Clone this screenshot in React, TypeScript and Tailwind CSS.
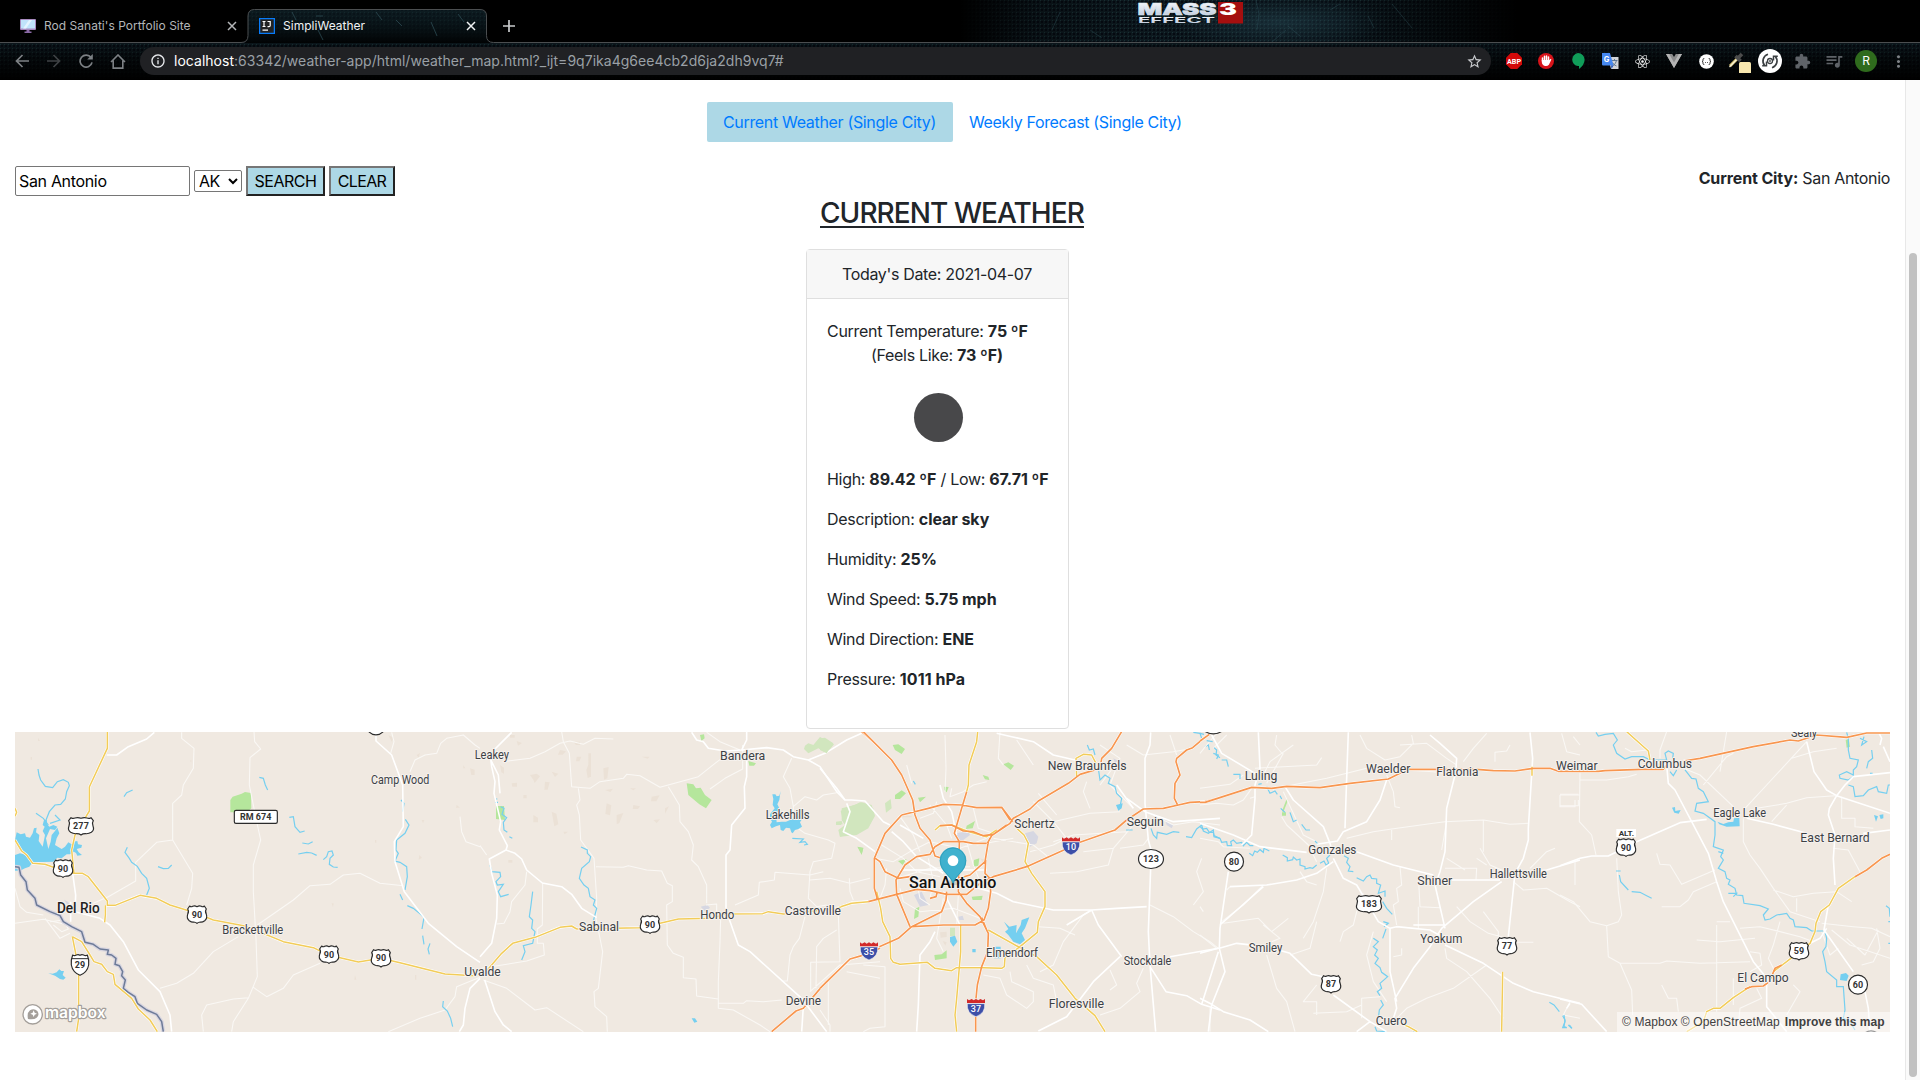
import React from "react";
import { FaReact } from "react-icons/fa";
import { MdExtension, MdQueueMusic, MdStarBorder, MdMoreVert, MdInfoOutline } from "react-icons/md";

const SANS = "font-['Inter','Liberation_Sans',sans-serif]";

/* ---------- Browser chrome ---------- */

function Texture() {
  return (
    <svg className="absolute inset-0 h-20 w-full" width="1920" height="80" viewBox="0 0 1920 80">
      <defs>
        <pattern id="mesh" width="4" height="4" patternUnits="userSpaceOnUse">
          <rect width="4" height="4" fill="#0d191f" />
          <rect width="2" height="2" x="1" y="1" fill="#050a12" />
          <rect width="1" height="1" fill="#1b3338" />
        </pattern>
        <linearGradient id="topFade" x1="0" x2="1" y1="0" y2="0">
          <stop offset="0" stopColor="#000" />
          <stop offset=".5" stopColor="#000" />
          <stop offset=".54" stopColor="#000" stopOpacity=".3" />
          <stop offset=".6" stopColor="#000" stopOpacity="0" />
          <stop offset=".7" stopColor="#000" stopOpacity=".1" />
          <stop offset=".79" stopColor="#000" />
          <stop offset="1" stopColor="#000" />
        </linearGradient>
        <linearGradient id="barFade" x1="0" x2="0" y1="0" y2="1">
          <stop offset="0" stopColor="#000" stopOpacity=".1" />
          <stop offset=".45" stopColor="#000" stopOpacity=".65" />
          <stop offset="1" stopColor="#000" />
        </linearGradient>
        <radialGradient id="glow">
          <stop offset="0" stopColor="#2d5563" stopOpacity=".45" />
          <stop offset="1" stopColor="#2d5563" stopOpacity="0" />
        </radialGradient>
      </defs>
      <rect width="1920" height="80" fill="url(#mesh)" />
      <ellipse cx="1280" cy="22" rx="110" ry="26" fill="url(#glow)" />
      <rect width="1920" height="42" fill="url(#topFade)" />
      <rect y="42" width="1920" height="38" fill="url(#barFade)" />
      <g stroke="#38626b" strokeOpacity=".4" strokeWidth=".8" fill="none">
        <path d="M1256 0l3 14-2 16M1392 4l20 24M1368 16l6 12M1272 42l14-12M1300 36l-12-10M1060 12l-8 18M1090 30l12 8M1330 10l10-6" />
      </g>
    </svg>
  );
}

function MassEffectLogo() {
  return (
    <svg className="absolute left-[1136px] top-0" width="110" height="26" viewBox="0 0 110 26">
      <defs>
        <linearGradient id="steel" x1="0" x2="0" y1="0" y2="1">
          <stop offset="0" stopColor="#fff" />
          <stop offset="1" stopColor="#b5c4d8" />
        </linearGradient>
      </defs>
      <rect x="82" y="2" width="25" height="21.500" fill="#a50f0f" />
      <g fontFamily="Inter" fontWeight="900" fill="url(#steel)">
        <text x="1.500" y="15" fontSize="16.500" textLength="79" lengthAdjust="spacingAndGlyphs" stroke="#dfe7f2" strokeWidth=".5">MASS</text>
        <text x="83" y="15" fontSize="16.500" textLength="18" lengthAdjust="spacingAndGlyphs" fill="#fff">3</text>
        <text x="2" y="22.800" fontSize="7.800" fontWeight="700" textLength="77" lengthAdjust="spacingAndGlyphs">EFFECT</text>
      </g>
    </svg>
  );
}

function CloseX({ color }: { color: string }) {
  return (
    <svg width="10" height="10" viewBox="0 0 10 10" fill="none" stroke={color} strokeWidth="1.500">
      <path d="M1 1l8 8M9 1l-8 8" />
    </svg>
  );
}

function MonitorIcon() {
  return (
    <svg width="16" height="14" viewBox="0 0 16 14">
      <rect x="0" y="0" width="16" height="11" rx="1" fill="#a98bc0" />
      <rect x="1" y="1" width="14" height="8.500" fill="#bfe3fb" />
      <path d="M3 9.500l6-8.500h3l-6 8.500z" fill="#e3f4ff" />
      <path d="M6.500 11h3v1.500h2V14h-7v-1.500h2z" fill="#8c6ba8" />
    </svg>
  );
}

function IdeaIcon() {
  return (
    <svg width="16" height="16" viewBox="0 0 16 16">
      <rect x=".6" y=".6" width="14.800" height="14.800" fill="#222" stroke="#087cfa" strokeWidth="1.300" />
      <path d="M3.500 3.500h3M5 3.500v5M3.500 8.500h3M8.500 3.500h2.700v4q0 1.200-1.200 1.200h-1.500M3.500 12.200h5.500" stroke="#fff" strokeWidth="1.200" fill="none" />
    </svg>
  );
}

function TabOutline() {
  return (
    <svg className="absolute left-0 top-0" width="1920" height="44" viewBox="0 0 1920 44">
      <defs>
        <linearGradient id="tabFade" x1="0" x2="0" y1="0" y2="1">
          <stop offset="0" stopColor="#0d1e23" stopOpacity=".5" />
          <stop offset="1" stopColor="#010304" />
        </linearGradient>
      </defs>
      <path d="M242 43q6 0 6-6V16q0-6.500 6.500-6.500H480q6.500 0 6.500 6.500V37q0 6 6 6z" fill="url(#mesh)" />
      <path d="M242 43q6 0 6-6V16q0-6.500 6.500-6.500H480q6.500 0 6.500 6.500V37q0 6 6 6z" fill="url(#tabFade)" />
      <path d="M292 12l4 8M316 16h7M376 12l6 8M396 20l6 6M431 22l6 14M458 14l6 8M318 30l5 10" stroke="#30525a" strokeWidth=".7" />
      <path d="M0 42.500H241q7 0 7-7V16q0-6.500 6.500-6.500H480q6.500 0 6.500 6.500V35.500q0 7 7 7H1920" stroke="#4b4e50" fill="none" />
    </svg>
  );
}

function Cell({ children }: { children?: React.ReactNode }) {
  return <div className="flex h-7 w-8 shrink-0 items-center justify-center">{children}</div>;
}

function Toolbar() {
  return (
    <div className="relative flex h-[38px] items-center text-[#5f6368]">
      <div className="flex w-[140px] items-center pl-[6px]">
        <Cell>
          <svg width="14" height="14" viewBox="0 0 14 14" fill="none" stroke="#7d8185" strokeWidth="1.700"><path d="M14 7H1.500M7.500 1L1.500 7l6 6" /></svg>
        </Cell>
        <Cell>
          <svg width="14" height="14" viewBox="0 0 14 14" fill="none" stroke="#3f4245" strokeWidth="1.700"><path d="M0 7h12.500M6.500 1l6 6-6 6" /></svg>
        </Cell>
        <Cell>
          <svg width="14" height="14" viewBox="0 0 14 14" fill="none" stroke="#7d8185" strokeWidth="1.700"><path d="M12 3.600A6 6 0 1 0 13 8.400" /><path d="M13.800 0v5.600H8.200z" fill="#7d8185" stroke="none" /></svg>
        </Cell>
        <Cell>
          <svg width="16" height="15" viewBox="0 0 16 15" fill="none" stroke="#7d8185" strokeWidth="1.600"><path d="M1 8l7-7 7 7M3.200 6.500v7.600h9.600V6.500" /></svg>
        </Cell>
      </div>
      <div className="flex h-7 w-[1351px] items-center rounded-full bg-[#202124] pl-[10px] pr-2">
        <MdInfoOutline className="text-[16px] text-[#e8eaed]" />
        <span className="ml-2 whitespace-pre text-[14px] tracking-[0.025px] text-[#9aa0a6]">
          <span className="text-white">localhost</span>:63342/weather-app/html/weather_map.html?_ijt=9q7ika4g6ee4cb2d6ja2dh9vq7#
        </span>
        <MdStarBorder className="ml-auto text-[17px] text-[#c8cacd]" />
      </div>
      <div className="ml-[7px] flex items-center">
        <Cell>
          <svg width="16" height="16" viewBox="0 0 16 16"><path d="M4.700 0h6.600L16 4.700v6.600L11.300 16H4.700L0 11.300V4.700z" fill="#d20a0a" /><text x="1" y="10.800" fontFamily="Roboto" fontWeight="700" fontSize="7.800" textLength="14" lengthAdjust="spacingAndGlyphs" fill="#fff">ABP</text></svg>
        </Cell>
        <Cell>
          <svg width="16" height="16" viewBox="0 0 16 16"><circle cx="8" cy="8" r="8" fill="#d7141a" /><path d="M4.500 8V5M6.500 8V3.300M8.500 8V2.900M10.500 8V4" stroke="#fff" strokeWidth="1.500" strokeLinecap="round" /><path d="M3.800 7h7.500l1.400-1.300.7.800-2.500 5.300Q9.500 13.500 7 13q-3-.8-3.200-4z" fill="#fff" /></svg>
        </Cell>
        <Cell>
          <svg width="14" height="16" viewBox="0 0 14 16"><path d="M7 0a6.600 6.600 0 0 1 6.600 6.600Q13.600 12 8 16v-2.900H7A6.600 6.600 0 0 1 7 0z" fill="#109d59" /></svg>
        </Cell>
        <Cell>
          <svg width="17" height="16" viewBox="0 0 17 16"><path d="M6 4h10.500v12H9z" fill="#d3d5d8" /><path d="M9.500 7.500h6M12.500 6v1.500M10.500 13q3.500-2 4-5.500M10.500 9.500q1 2.500 4 3.500" stroke="#57708c" strokeWidth=".9" fill="none" /><path d="M0 0h8l3.500 12.500H1Q0 12.500 0 11.500z" fill="#4688f1" /><path d="M9 12.500h2.500L9.500 16z" fill="#2858b8" /><text x="1.800" y="9" fontFamily="Inter" fontWeight="700" fontSize="7.500" fill="#fff">G</text></svg>
        </Cell>
        <Cell><FaReact className="text-[15px] text-[#f1f1f1]" /></Cell>
        <Cell>
          <svg width="16" height="14" viewBox="0 0 16 14"><path d="M0 0h6.200L8 3l1.800-3H16L8 14z" fill="#8c8c8c" /><path d="M0 0h3.200L8 8.400 12.800 0H16L8 14z" fill="#b4b4b4" /></svg>
        </Cell>
        <Cell>
          <svg width="15" height="15" viewBox="0 0 15 15" fill="none"><circle cx="7.500" cy="7.500" r="7.300" fill="#fff" /><path d="M5.300 4.500H5q-1 0-1 1v.8q0 1.200-1 1.200 1 0 1 1.200v.8q0 1 1 1h.3M9.700 4.500h.3q1 0 1 1v.8q0 1.200 1 1.200-1 0-1 1.200v.8q0 1-1 1h-.3M6 8.500h.8M8.200 8.500H9" stroke="#222" strokeWidth=".9" /></svg>
        </Cell>
        <Cell>
          <svg width="26" height="24" viewBox="0 0 26 24"><path d="M5 17l8-8" stroke="#d7c16b" strokeWidth="3" /><path d="M4.500 18L12 10" stroke="#f8f3d8" strokeWidth="1.200" /><path d="M10.500 7l5 5M12.500 9.500L17 5" stroke="#4c4c4c" strokeWidth="3.600" /><rect x="14" y="13" width="12" height="12" rx="1.500" fill="#f8e7ae" /></svg>
        </Cell>
        <Cell>
          <div className="flex h-6 w-6 shrink-0 items-center justify-center rounded-full bg-white">
            <svg width="18" height="18" viewBox="0 0 18 18" fill="none" stroke="#3c4043" strokeWidth="1.700"><path d="M7 2.300A7 7 0 0 0 3.600 13.500M11 15.700A7 7 0 0 0 14.400 4.500" /><path d="M1.200 13.800h4.300V9.500M16.800 4.200h-4.300v4.300" strokeWidth="1.500" /><circle cx="9" cy="9" r="2.500" strokeWidth="1.300" /><circle cx="9" cy="9" r=".9" fill="#3c4043" stroke="none" /></svg>
          </div>
        </Cell>
        <Cell><MdExtension className="text-[17px] text-[#5f6368]" /></Cell>
        <Cell><MdQueueMusic className="text-[20px] text-[#5f6368]" /></Cell>
        <Cell>
          <span className="flex h-[22px] w-[22px] items-center justify-center rounded-full bg-[#2f6b1d] text-[12px] text-white">R</span>
        </Cell>
        <Cell><MdMoreVert className="text-[19px] text-[#7d8185]" /></Cell>
      </div>
    </div>
  );
}

function BrowserChrome() {
  return (
    <header className="relative h-20 shrink-0 overflow-hidden bg-black">
      <Texture />
      <MassEffectLogo />
      <TabOutline />
      <div className="relative flex h-[42px] items-center pt-[10px] text-[12px]">
        <div className="flex w-[248px] items-center pl-5 pr-[11px] text-[#b4b6b8]">
          <MonitorIcon />
          <span className="ml-2 tracking-[0.02px]">Rod Sanati's Portfolio Site</span>
          <span className="ml-auto"><CloseX color="#b4b6b8" /></span>
        </div>
        <div className="flex w-[238px] items-center pl-[11px] pr-[10px] text-[#f1f3f4]">
          <IdeaIcon />
          <span className="ml-2 tracking-[0.02px]">SimpliWeather</span>
          <span className="ml-auto"><CloseX color="#f1f3f4" /></span>
        </div>
        <svg className="ml-[17px]" width="12" height="12" viewBox="0 0 12 12" stroke="#c9cbcd" strokeWidth="1.700"><path d="M6 0v12M0 6h12" /></svg>
      </div>
      <Toolbar />
    </header>
  );
}

/* ---------- Map ---------- */

type Layer = {
  dx: number;
  minor?: string;
  white?: string;
  yellow?: string;
  orange?: string;
  river?: string;
  lake?: string;
  green?: string;
  pale?: string;
  grey?: string;
  hills?: string;
};

const layers: Layer[] = [
  {
    dx: -15,
    minor:
      "M545 22V40L582 70 580 130 550 180 545 210 518 235V345L578 445 575 490 560 540M518 345L470 352 407 412V468L325 515 280 535M762 20L764 50 782 72 750 98 748 180 770 290 782 345 760 420V500L768 640 772 755 745 820 700 890 695 920M772 600L880 525 930 482 990 478 1030 450 1080 445 1140 475 1210 482M745 818L700 822 620 840 605 870 610 920M760 787L800 815 850 790 880 750 960 715M715 635L640 680 580 745 530 775 480 790M1230 140L1245 105 1275 90 1310 85 1322 55 1340 40 1390 30 1425 60 1440 70M1380 275L1385 320 1398 350 1440 365M45 490L60 545 80 562 130 570M45 595L130 583 205 600M135 580L165 620 180 640 210 625M150 590L190 585 205 612 185 620 160 600M1440 757L1370 785 1365 815 1335 855 1260 880 1165 920M1175 22L1182 50 1172 85",
    white:
      "M320 90H350L385 65 440 42 463 22M1128 22V48L1175 90 1208 180 1210 305 1183 350 1185 410 1213 500 1285 595 1370 665 1440 712M218 445L227 510 225 560 300 580 330 600 370 650 415 735 480 800 510 870 515 920M212 590L212 530M1440 760L1410 790 1395 850 1390 900 1378 920",
    yellow:
      "M322 20V70L268 186V258L225 330 215 375 222 445M45 345L65 378 80 390 98 415 135 418 175 432 222 445H248L265 455 322 528V541H345L420 511 470 520 510 540 590 565 640 585 735 603 850 650 940 668 985 690 1075 711 1143 700 1200 713 1335 747 1420 752M316 541V570L314 592M45 250L50 262 45 274M217 635L228 690 236 740V880L230 920M217 635L245 650 270 690 282 710 305 718 322 740 340 748 345 778 395 820 415 852 450 885 472 920",
    river:
      "M114 132L117 150 122 165 136 184 158 188 172 170 190 164 205 172 208 182 200 200 196 222 182 238 165 240 148 260 136 290M372 215L380 203 398 195M778 157L790 160 796 180 803 195M868 277L880 275 885 305 900 322 914 318M907 354L925 357 938 350M895 387L920 382 935 384 950 391M970 404L980 395 985 380 996 378 1000 390 990 400 988 418 1000 426 1013 427M382 367L375 382 388 400 395 412 412 424 425 445 440 460 448 490 440 510M474 425L490 431 505 430 515 420M1203 225L1212 235 1208 260M1216 283L1227 300 1215 325 1190 345 1188 375 1195 385 1185 408 1200 412 1220 425 1222 455 1215 495M1200 508L1208 525M1222 542L1240 550 1262 568 1272 578 1266 612M1268 632L1272 658M1290 655L1284 672 1288 688M1330 828L1328 845 1342 858 1352 880 1358 905M108 265L130 280 145 300M165 270L180 285 150 295",
    lake:
      "M45 390L60 385 80 390 65 375 52 360 45 345 50 322 62 328 75 325 78 335 90 338 98 325 102 310 110 308 108 322 118 330 116 348 128 365 135 330 128 318 134 305 128 300 132 285 140 285 142 298 148 305 160 300 172 305 165 315 150 312 138 340 145 372 152 350 155 330 165 318 172 308 178 325 170 340 165 360 185 372 195 365 205 352 215 358 220 350 232 348 234 358 246 360 244 368 230 372 236 382 246 390 232 392 228 384 222 380 210 388 200 388 185 400 172 398 160 410 98 412 88 425 75 430 60 437 45 437ZM145 745L158 746 170 742 178 733 184 738 192 738 188 750 197 758 190 764 180 762 165 752Z",
    green: "M691 225L698 215 725 206 735 201 753 204 754 250 740 262H691Z",
    grey: "M192 524L204 530 214 545 208 550Z",
    hills: "M92 96h4v8h-4zM114 38l6 10h-6zM570 108l4-4v8zM1165 30l16 8-6 12zM1210 150l6 14h-8zM1250 90l10-6-4 14zM1280 158h10l-4 8zM1370 240l10 8h-12zM1410 130l14 4v16h-10zM1390 120l6 10h-6zM1265 285h8l-4 10zM1258 390l8 8-10 6zM1125 345h4v8h-4zM1065 750l4 14h-6zM1245 750h4v14h-4zM995 535h6l-2 12z",
  },
  {
    dx: 465,
    minor:
      "M245 20L250 50 268 85 275 185 330 190 360 170 430 160 440 148 480 152 540 187 655 155 705 115 725 100M295 190L300 225 290 240 298 270 302 345 342 400 350 520 348 580 368 680 355 790 342 800 345 845 380 875 382 920M348 425L430 427 445 422 500 435 545 438 562 475 577 482V530L560 540 562 660 580 685 610 697V758L648 762 650 813 715 822V835M565 185L580 210 598 240 600 290 625 320 640 360 635 405 655 425 680 480V535M678 540L710 537V560M722 580L720 650 715 770V850L760 855 840 900 870 920M715 835H790L800 827 850 830 905 825M140 440L135 480 95 530 90 560 72 595 50 597M188 475L187 600 172 612V655H190L193 690 140 708 5 730M68 110L150 100 195 80 240 55 270 48 310 58 345 40 400 42M690 192L735 160 788 132V60M680 22L720 50 780 75M935 100L910 155 930 190 940 245 975 215 1010 225 1030 210 1070 203M940 245V300L975 325 1045 345 1065 355 1055 400 1000 410 990 440 985 520 1010 545 1040 540M765 540L835 510 838 472 883 465 885 442 990 450 1030 440M990 465L1050 460 1110 475 1170 460M1108 460L1110 500 1120 525M975 575L958 640 940 665 930 690 922 768H905M1075 570L1080 710 992 712V800M1008 790L1010 665 1030 640 1070 615M1045 770V900M990 800L1080 720 1200 710M1100 740L1200 760M10 765L80 790 165 855 200 848 310 920M0 362L20 390",
    white:
      "M95 22L42 75 32 100 35 125 45 170 42 205 55 260 62 290 58 315 82 362 78 375 28 402 35 445 52 510 50 580 35 655 0 695M78 375L105 385 125 402 140 435 187 474 245 485 275 508 305 550 350 578M635 22L650 45 670 50 685 70 735 78 785 75 800 45V20M785 75L860 68 910 75 940 95 985 105 1020 125 1070 200 1095 225M985 105L1035 85 1100 45 1145 25M800 75V155L793 185 795 250 755 300 750 375 738 390V555L775 660 810 680 965 820 1040 920M970 845L965 920M14 765L45 860 70 900 95 920M30 100L55 150 60 205",
    yellow:
      "M22 735L65 685 98 655 165 637 240 607 275 603 290 612M290 612L400 610 480 608 540 595 595 582 700 580 730 567 848 566 865 560 910 567 1065 552 1100 540 1115 533 1165 530",
    orange: "M875 920L948 858 970 850 1000 815 1035 773 1112 702 1150 690 1200 670M1145 20L1200 68",
    river:
      "M45 222L52 222M45 232H54M62 245L72 250 66 268 80 278 70 292 72 315 82 322M88 335L97 340M30 420L35 440 60 442 62 455 48 470 52 480 70 478 55 500 62 515 86 508M158 500L153 540 148 575 158 585 155 610 165 620 158 655 130 662 135 680 125 705M303 366L322 375 322 385 332 395 328 410 305 430 298 460 312 480 325 490 330 515 345 525 340 540 350 550 342 580 338 600M937 340L970 342 960 352 975 350 982 358 972 360",
    lake:
      "M902 198L898 212 890 214 886 208 877 208 880 222 878 240 884 250 870 268 870 280 876 290 870 300 875 310 888 304 900 300 902 315 910 318 918 308 930 310 934 322 938 325 945 315 955 312 966 305 960 292 968 280 955 272 945 270 938 282 930 285 918 290 905 290 890 292 888 270 898 250 892 238 898 225ZM635 880L645 880 652 890 643 893Z",
    green:
      "M620 175L640 178 648 190 662 188 675 210 695 225 678 250 658 238 625 210ZM48 243L72 243 75 285 48 282ZM660 30L672 28 674 40 664 48ZM805 108L828 115 822 122 808 122ZM1134 366L1150 370 1145 388Z",
    pale:
      "M975 62L985 55 1000 60 1020 36 1062 58 1040 85 1015 70 985 85 972 72ZM1095 250L1145 232 1175 240 1185 272 1165 310 1130 330 1080 335 1078 318 1100 298 1088 285 1082 258ZM1070 290L1085 288 1088 298 1072 300Z",
    grey: "M662 545L682 540 690 548 676 560Z",
    hills:
      "M325 85l8 0 0 70-10 4-4-24 6-16zM150 150l20-4 10 8-16 20-4-10zM215 140l20 6-10 10zM195 170l14 2-6 22-10 0zM130 210h10v10h-10zM60 120l12 8v18l-8-4zM290 95h14l-6 14h-10zM370 130l16-4-4 34-10 4zM95 175l16-2 0 12-14 0zM160 270l14 8 0 14h-14zM215 260l14 6 6 32-12 6zM250 320h14l-10 8zM380 235l14 6-4 30-14-4zM410 270l20-6-12 30-8 4zM460 240l20 4-6 8h-16zM515 215l24-4-10 18h-16zM555 250l12-6-12 22zM520 285l20-2-10 12zM450 190h18l-8 6zM375 195l24-4-8 10zM90 30h14v8h-14zM110 48l16 6-12 8zM240 75l18 4-10 10h-14zM485 95h24l-6 6zM280 50h20v10h-12zM85 405h12v8h-12z",
  },
  {
    dx: 805,
    minor:
      "M375 30L378 130 375 200M260 120L275 175M540 22L535 100 550 120M590 45L640 120M185 360L250 400 290 440 360 455M350 230L340 265 300 280M395 190L390 215 430 200 460 180 500 170M330 240L380 300 395 340M460 250L475 310 520 325M240 275L280 330 300 380M165 400L220 410 270 380 330 350 420 370 500 340M230 460L330 430 450 425M240 490L250 530 300 560 400 550 480 580M325 400L340 470 330 520M415 510L410 600M370 520L350 640 370 680M440 350L460 420 480 470M470 360L580 340M200 430L195 480 180 520M290 470L300 520 330 540M520 340L640 360 690 400M640 230L700 290 810 265 900 260M700 290L740 340 700 360 630 380M655 205L710 270M800 170L790 200 810 250M840 60L900 100 870 180 940 250M920 60L970 90 1060 80 1120 70M900 100L840 180M880 370L865 420 770 440 690 445M940 300L880 370 790 380M700 350L760 330 920 320M1000 270L1060 300 1120 290 1200 300M985 340L970 360 900 370M990 540L1060 575 1120 620 1170 650 1195 670M655 605L720 610 765 630M660 740L700 720 730 650 790 570 815 555M870 735L890 780 870 795M970 730L950 775 960 800 900 850 840 870M570 740L575 770 640 800 640 830 620 850 560 810 540 760 490 750M130 720L195 725 195 905 150 910 130 920M0 855L30 900 30 920M1170 850V920M1120 540L1150 500 1130 440 1145 400M1070 90L1050 30M620 720L640 760 700 780 710 830",
    white:
      "M530 25L575 35 640 50 700 90 765 105M992 22L990 60 975 100 975 235 985 345 1000 400M992 430L985 620 990 720 1007 920M440 480L530 505 580 530 700 555 815 555 835 600 905 695M815 555L890 550 980 545M655 918L740 875 820 770 900 695M1050 695L1195 670M990 725L1038 800 1100 812 1145 838 1200 855M1145 838L1195 680M345 620L330 650 300 690 295 840 290 920M0 130L50 190 75 225 95 225 135 228 190 290 210 300M80 235L90 260 70 320 110 340 165 380M215 320L250 350 290 395 370 445M240 300L310 340M360 180L370 220 395 260 410 330M920 220L975 260 1060 290 1200 280M890 180L940 250M815 555L740 600M240 435H500M370 500L400 560 420 600",
    yellow:
      "M473 20L470 50 447 120 445 180 440 200M345 315L360 302 395 300 440 318 500 335 530 315M770 155L768 100 790 88 815 90 828 115M588 308L612 330 625 355 615 410 635 445 675 500 675 545 655 590 652 622 600 665 555 698 553 725 545 730 490 728 410 728 395 737 345 730 322 712 240 718 220 712 212 700 210 635 188 590 182 550 170 500M62 545L95 535 145 530M505 615L600 668 650 695 710 750 765 820 825 872 855 920M422 600V680L410 820 405 870 410 920",
    orange:
      "M130 20L215 105 245 150 278 225 285 270 300 310 330 345 345 393 380 405 400 440M440 200L425 250 403 325 418 350 415 500 440 535 480 575 505 625 503 680 485 725 472 780 468 820M467 875V920M905 20L875 70 845 100 840 130 780 148 745 175 655 228 630 252 580 280 570 295 515 332 505 350 495 410 450 450 415 460M545 247L570 285M245 270L325 250 370 238 425 240 470 248 545 247 578 290M245 270L195 325 163 400V490L173 525M163 398L180 410 195 440 235 460 270 455M145 530L230 508 290 493 330 497 380 508 440 508 480 475 520 455 620 425 725 378 780 352 885 315 920 285 970 252 1030 250 1075 240 1110 232 1155 230 1200 218M1072 238L1063 220 1065 175 1080 150 1068 110 1070 100 1100 75 1118 68 1165 28M0 790L90 702 125 692M178 665L235 640 275 605 365 560 378 525 380 500M270 605L230 508 228 465 255 420 290 395 330 388 345 365 370 350 430 350 460 355H500M502 355L510 340M275 605L370 600 465 600 492 585 505 550 512 500 510 460 495 445 497 405M330 520L348 515 352 500M360 302L395 300 430 318 460 320 490 332 520 328 560 300M485 578L500 615",
    river:
      "M802 60L808 75 820 72 825 90M835 130L840 165 855 150 870 160 865 175 885 185 890 205 905 220 900 245M918 315H938M993 310L1000 330 1010 340 1012 322 1040 328 1060 320 1078 322M1098 335L1115 338 1130 312 1145 300 1150 318 1165 325 1180 315 1182 335 1200 340M1120 22L1140 25 1145 40M1155 65L1165 60 1168 75M1180 85L1195 90 1190 102M280 168L286 178",
    lake:
      "M552 590L568 605 590 600 588 625 602 600 605 585 628 577 615 610 605 625 615 645 600 658 580 650 565 630 555 620 565 612ZM390 636L405 632 412 650 400 665 390 650ZM457 672h10v10h-10zM522 665h20v35h-20zM888 240L908 235 905 250 895 257Z",
    green:
      "M218 60L235 58 255 72 245 87 225 75ZM225 210L245 196 258 205 240 222 225 222ZM294 218L318 215 300 232ZM372 185L386 186 380 202 372 195ZM440 302L465 288 458 310 438 312ZM462 405L478 400 475 422 460 425ZM234 408L260 402 248 420ZM112 365L130 368 125 390ZM285 552L298 545 295 575 282 582ZM343 690L365 688 380 676 380 700 345 705ZM455 515L488 512 485 525 458 525ZM550 118L565 112 582 122 572 135ZM488 150L505 155 508 165 495 163Z",
    pale:
      "M0 40L15 38 40 55 20 85 0 75ZM65 250L105 240 120 232 160 250 163 275 140 310 105 325 60 335 55 315 75 300 65 285ZM195 235L212 222 215 250 198 263ZM48 290h15v10H48zM390 608h15v25h-15z",
    grey: "M408 325L445 318 450 330 430 345 415 350ZM615 325L640 318 655 335 650 355 630 365ZM282 510L305 500 325 540 300 545ZM415 575L428 572 432 585H418ZM1035 285L1060 300 1055 310 1040 300ZM880 100L895 108 885 115Z",
    hills: "M360 622l20-2v16l-18 2zM368 648l12 4-4 10zM480 400l14 4-4 10zM245 272l30 0v5h-30z",
  },
  {
    dx: 1185,
    minor:
      "M50 25L20 60 0 85M80 30L40 70M250 85L200 175M165 130L250 125 350 120 365 98M0 190L90 178 130 150M250 185L380 160 500 130M480 30L500 70 555 105 600 95 640 55 635 30M560 150L580 200 585 245 600 248M280 60L210 110 190 150M600 60L680 55 740 100 770 120M860 25L820 70 790 110M885 110V82L920 78 930 60M765 150L700 140 610 135M440 340L520 320 575 312 700 295 735 290 850 285 930 298 985 295M575 315V345M850 285V380M740 290L725 375M600 425L605 480 590 490 595 530 580 540 590 600M655 450L660 545 720 548M655 545V610M795 435L740 400M735 430L830 430 828 465M0 240L50 235 100 240 130 225 155 190M0 340L55 350 70 365 150 370M165 215L150 220M1140 60L1120 35M1085 25L1100 80 1140 90M1080 210H1140M1080 210V245H1125V225M850 560L880 600 895 620V670M770 545L810 590 865 625 920 640M925 652H1000M940 470L970 495 1040 490 1110 530 1140 545M990 430L1040 380 1065 370M250 200L310 330 350 350M245 275L260 300 325 360 350 410M300 440L320 470 350 480M380 430L370 500 340 590 310 640M10 560L0 545M0 630L50 670M90 485L80 495M65 590L130 540 190 480M70 595L175 580 215 620 265 580M190 600L240 640 215 650M200 690L230 790 260 830 285 920M270 690L330 670 350 590M490 505L470 560 460 600 430 620 420 650M520 620L500 690 520 770 560 830M605 670V690L580 695M735 670L740 700 800 740 870 820 910 880M860 720L760 790 680 820 620 850 590 880M485 880V820L540 815M485 840L440 860 340 865M350 870V830L310 830 350 780M940 450L870 420 840 370M1110 830L1090 870 1140 880M860 420L830 400M230 30L225 60 250 90",
    white:
      "M35 30L65 85 170 148M175 22L180 130 165 180 165 220 155 330 125 360M255 185L280 225 370 305 390 355 400 390M445 22L440 160 435 310M690 30L720 55 770 100 768 130M765 150L740 250 735 380 720 440 705 480 735 610M735 600L640 600M990 22L998 100 985 310 985 345 970 400 945 445 935 540 925 635M945 445L1040 435 1140 405M900 465L755 465M905 470L820 530 725 610 690 665 640 730 585 820 590 850 580 880M735 660L850 715 940 775 1000 800 1140 835M0 295L100 330 180 365 320 382M350 358L412 348 430 320 500 290 540 225 560 165M470 380L580 420 700 450M400 400L430 460 470 480 500 530 535 590 570 610 570 740 590 830M570 610L590 605 690 615 735 640M400 410L350 445 290 465 200 480 90 485M85 440L60 610 58 670 75 740 35 840 25 920M58 670L110 655 200 665 270 685 335 748 370 755M400 810L510 890 560 920M35 838L70 860 150 885 205 920M0 685L60 668M0 820L35 838M510 890L470 920M190 485L60 600",
    yellow: "M996 125V152M908 740L905 920M600 895L625 905 652 920",
    orange: "M0 232H15L155 187 215 190 260 184 360 188 450 175 565 162 600 145 625 133H830L880 137 945 138 1000 130H1050L1075 139 1140 137M0 48L28 28",
    river:
      "M0 25L12 28M20 47L38 50M42 68L50 75 48 90 60 98M65 105H80L85 125M100 148H120V162M140 165L155 165M175 178L185 176M200 185L210 205 225 198 232 208M240 212L245 222M242 250L255 262M270 262L280 290 290 285M305 298L318 315 330 315M0 305L8 312 20 310 28 322 40 322 42 332 60 340 65 352 80 350 82 362 95 362 92 350 100 345 110 355 125 352 130 362 140 352 150 362 160 362M148 385L158 392 164 378 172 382 180 374 190 382 192 370 208 378M248 390L262 398 262 408 278 404 280 396 290 405 300 402 300 420 315 425 315 432 330 428 338 430 350 420M360 415L372 408 378 420 386 415 380 400 390 390M345 348L355 358M432 392L445 400 440 412 450 425 445 438 460 440M470 458L490 468 500 455 510 450 515 460 530 462 530 475 542 480 535 505 555 498 555 515M548 530L560 550 577 568M550 590L565 595 552 605M558 612L548 640M520 640L535 650 520 665 532 675 524 690 535 700 525 715 540 728 545 742 563 755 540 775 545 790 532 800 540 812M542 825L550 840 538 855 535 880M525 905L530 918 560 920M640 918h5M1048 832L1062 840 1078 860M1088 872L1095 885 1092 905 1100 908M1105 900L1115 910",
    green: "M260 222L264 226 250 262 246 258ZM246 262h12v10h-12z",
  },
  {
    dx: 1545,
    minor:
      "M60 140L58 290 95 330 108 390M60 165H140L205 155 230 148M0 208H55M0 242H55V225M45 410V480M0 510L40 530 90 590 140 602 175 590 185 570 175 500 170 400M140 602L145 695 180 715 215 795 218 870M180 715H300L320 708 420 715 570 710M470 600V860M470 590H510M410 645L480 650 585 640M430 180L500 95 520 85M480 140L500 20M550 280V350L570 390 600 430 640 490 690 560 780 590M555 250L620 180 740 50M590 250L680 235 740 218 825 212M635 290L680 240M290 385L300 418 330 420 365 478 465 435M470 470L400 500 385 525 360 545H305M640 495L700 515 760 505 830 500 875 530M710 520V560M660 590L640 660 625 700 640 730M570 680L600 685 605 720 570 740M540 610L600 605 720 635 760 650M785 595L880 605 935 610 990 635M815 615L870 660 990 700M820 370L865 375 900 440M845 215V280H885V305L940 310M905 720L940 710 960 670 950 610M785 620L810 690 835 670M520 760V840M590 790L605 820 540 850 535 900M305 780L325 820H350L355 860M195 70L215 80 260 75M300 100V75L320 20M520 245L420 150 370 130M695 100L760 80 830 70M860 640L915 690 955 615M680 870L720 800 700 780",
    white:
      "M270 105L320 120 325 175 345 195 395 290 445 385 470 470 490 530 545 640 580 710 625 765M0 422L60 400 95 393H145L230 350 360 293 440 283M560 280L640 298 740 325M740 50L762 140 800 195 830 212 990 265M830 212L855 180 880 155 990 143M830 212L808 250 805 270 825 330 820 400 825 480M805 540L792 615 880 740M800 610L780 640 740 660M915 800L925 850 930 920M620 765V845L680 920M960 60L965 40 955 20M990 110L970 65M0 822L65 838 140 920M910 325L990 315M20 850L30 835",
    yellow: "M200 20L265 78 270 105M380 920L430 890 440 860 460 850H480L520 818 570 785M640 740L680 710 750 655 765 620 768 595 782 560 808 540 835 490 885 455",
    orange: "M0 139H115L135 137 245 133H310L320 120M370 108L420 100 580 65 690 45 715 48 770 30 860 37 920 24H990M555 792L575 785 610 783 628 770 645 730 665 720M885 455L920 435 965 400 990 388",
    river:
      "M108 22L115 33 135 28 160 25 172 45 160 60 170 85 195 102 215 95 250 95 270 105 300 105 320 105 315 85 325 78 340 85 338 100M330 140L340 152 350 135M375 135L395 160 408 162 415 190 430 200 445 230 410 235 405 258 430 265 465 290 465 330 460 365 475 370 490 375 482 395 490 405 475 430 495 440 500 460 510 465 505 478 525 490 530 510 548 512 552 535 600 542 625 552 610 570 615 585 630 582 650 570 680 565 690 580 700 585 705 605 740 608 755 618 790 618M795 620L800 640 798 665 788 680 795 710 800 740 830 765 830 785 850 785 855 855 850 880 870 890 885 915M505 505L530 505 520 515M475 380L490 385M860 22L865 40 865 75 870 100 895 105 890 125 880 135 880 155 865 165 840 160 838 150 860 140 880 150M865 180L880 185 885 215 910 212 925 195 950 185 955 200 980 205 985 180H990M900 40L920 50 905 60 912 35M935 75L938 100 925 110 920 130M930 145h8M168 438h14M178 450L182 470 205 495M215 500L240 502 260 512 275 520M978 542L988 550 990 575M985 590h5M985 655h5M12 870L15 890 8 908 20 908M28 900L36 910",
    lake: "M472 290L490 297 505 292 520 290 522 280 538 278 539 304 500 305 478 298ZM336 248L345 246 346 258 362 255 356 266 343 263ZM842 748L858 744 866 752 860 768 840 765ZM942 270L954 274 948 290ZM958 270L970 268 970 280 962 282Z",
    green: "M857 45L866 42 870 65 860 68Z",
  },
];

const borderPath =
  "M45 425L57 427 62 450 78 470 82 495 105 520 110 540 150 560 180 572 190 590 215 605 245 620 255 652 280 658 300 672 325 675 322 688 335 690 348 700 345 718 358 722 368 740 365 752 376 765 370 790 385 802 405 815 412 835 440 855 470 868 485 890 490 920";

type Label = [number, number, number, number, string, string?];
/* [layer index, left x, baseline y, width, text, kind] */
const labels: Label[] = [
  [0, 1113, 176, 175, "Camp Wood"],
  [0, 171, 564, 128, "Del Rio", "city"],
  [0, 667, 627, 183, "Brackettville"],
  [0, 1424, 102, 103, "Leakey"],
  [0, 1393, 753, 109, "Uvalde"],
  [1, 720, 104, 136, "Bandera"],
  [1, 857, 283, 132, "Lakehills"],
  [1, 297, 618, 120, "Sabinal"],
  [1, 661, 581, 102, "Hondo"],
  [1, 914, 570, 169, "Castroville"],
  [1, 917, 841, 106, "Devine"],
  [2, 683, 135, 237, "New Braunfels"],
  [2, 583, 309, 121, "Schertz"],
  [2, 920, 303, 111, "Seguin"],
  [2, 498, 695, 156, "Elmendorf"],
  [2, 911, 719, 143, "Stockdale"],
  [2, 686, 848, 166, "Floresville"],
  [3, 134, 164, 98, "Luling"],
  [3, 498, 144, 133, "Waelder"],
  [3, 709, 153, 126, "Flatonia"],
  [3, 325, 387, 144, "Gonzales"],
  [3, 652, 479, 105, "Shiner"],
  [3, 869, 459, 172, "Hallettsville"],
  [3, 661, 655, 126, "Yoakum"],
  [3, 146, 681, 101, "Smiley"],
  [3, 527, 899, 94, "Cuero"],
  [4, -12, 134, 125, "Weimar"],
  [4, 233, 130, 163, "Columbus"],
  [4, 460, 277, 158, "Eagle Lake"],
  [4, 721, 351, 208, "East Bernard"],
  [4, 532, 770, 154, "El Campo"],
  [4, 693, 35, 78, "Sealy"],
  [2, 267, 488, 262, "San Antonio", "metro"],
];

/* [layer index, centre x, centre y, number, kind] */
const shields: [number, number, number, string, "us" | "uswide" | "round" | "oval" | "inter" | "mx"][] = [
  [0, 243, 304, "277", "uswide"],
  [0, 189, 431, "90", "us"],
  [0, 591, 569, "90", "us"],
  [0, 987, 689, "90", "us"],
  [0, 1143, 700, "90", "us"],
  [0, 240, 720, "29", "mx"],
  [0, 1128, 1, "", "round"],
  [1, 510, 599, "90", "us"],
  [2, 147, 680, "35", "inter"],
  [2, 753, 365, "10", "inter"],
  [2, 468, 850, "37", "inter"],
  [2, 993, 402, "123", "oval"],
  [2, 1180, -2, "", "oval"],
  [3, 102, 410, "80", "round"],
  [3, 507, 538, "183", "uswide"],
  [3, 393, 778, "87", "us"],
  [3, 921, 664, "77", "us"],
  [4, 198, 368, "90", "us"],
  [4, 717, 679, "59", "us"],
  [4, 894, 779, "60", "round"],
  [4, 933, 946, "", "round"],
];

function Shield({ x, y, n, kind }: { x: number; y: number; n: string; kind: string }) {
  return (
    <g transform={`translate(${x} ${y})`}>
      {kind === "us" && (
        <path d="M-22-26q4 4 9 1 6-3 13 1 7-4 13-1 5 3 9-1l6 9q-5 7 0 16 4 12-5 19-7 5-13 4-6 0-10 4-4-4-10-4-6 1-13-4-9-7-5-19 5-9 0-16z" fill="#fff" stroke="#2b2b2b" strokeWidth="3.500" />
      )}
      {kind === "uswide" && (
        <path d="M-30-26q6 4 12 1 9-3 18 1 9-4 18-1 6 3 12-1l7 9q-5 7-1 16 5 12-5 19-8 5-18 4-8 0-13 4-5-4-13-4-10 1-18-4-10-7-5-19 4-9-1-16z" fill="#fff" stroke="#2b2b2b" strokeWidth="3.500" />
      )}
      {kind === "round" && <circle r="28.500" fill="#fff" stroke="#2b2b2b" strokeWidth="3.500" />}
      {kind === "oval" && <ellipse rx="37.500" ry="28.500" fill="#fff" stroke="#2b2b2b" strokeWidth="3.500" />}
      {kind === "mx" && (
        <g>
          <path d="M-22-30q5 4 11 0 6-3 11 1 5-4 11-1 6 4 11 0 6 15 4 30-4 22-26 31-22-9-26-31-2-15 4-30z" fill="#fff" stroke="#2b2b2b" strokeWidth="3.500" />
          <path d="M-25-19h50" stroke="#2b2b2b" strokeWidth="3" />
        </g>
      )}
      {kind === "inter" && (
        <g>
          <path d="M-26-14h52q3 28-26 39-29-11-26-39z" fill="#3d4fa8" stroke="#fff" strokeWidth="1.500" />
          <path d="M-27-28l6 4 8-4 6 4 7-4 7 4 6-4 8 4 6-4v12h-54z" fill="#d22a2a" />
        </g>
      )}
      {n && (
        <text
          y={kind === "inter" ? 11 : 9}
          textAnchor="middle"
          fontFamily="Roboto"
          fontWeight={kind === "inter" ? 500 : 700}
          fontSize="27"
          letterSpacing="0.500"
          fill={kind === "inter" ? "#fff" : "#333"}
        >
          {n}
        </text>
      )}
    </g>
  );
}

function WeatherMap() {
  return (
    <div className="relative h-[300px] w-[1875px] overflow-hidden bg-[#f0e9e1]">
      <svg className="block" width="1875" height="300" viewBox="0 0 1875 300" fill="none" strokeLinejoin="round">
        {layers.map((l) => (
          <g key={l.dx} transform={`translate(${l.dx} -7) scale(.33333)`}>
            <path d={l.hills} fill="#ebe1d6" />
            <path d={l.pale} fill="#d1e6be" />
            <path d={l.green} fill="#b5e69c" />
            <path d={l.grey} fill="#d6d7e2" />
            <path d={l.minor} stroke="#faf8f5" strokeWidth="3.200" />
            <path d={l.lake} fill="#75cff0" />
            <path d={l.river} stroke="#75cff0" strokeWidth="3.600" strokeLinejoin="miter" />
            <path d={l.white} stroke="#fff" strokeWidth="4.800" />
          </g>
        ))}
        <g transform="translate(-15 -7) scale(.33333)">
          <path d={borderPath} stroke="#d9d6e0" strokeWidth="12" />
          <path d={borderPath} stroke="#6d7b98" strokeWidth="4.500" />
        </g>
        {layers.map((l) => (
          <g key={l.dx} transform={`translate(${l.dx} -7) scale(.33333)`}>
            <path d={l.yellow} stroke="#fff" strokeWidth="8" />
            <path d={l.orange} stroke="#fff" strokeWidth="8" />
            <path d={l.yellow} stroke="#f2cc59" strokeWidth="4.500" />
            <path d={l.orange} stroke="#f8964f" strokeWidth="5" />
          </g>
        ))}
        {shields.map(([i, x, y, n, kind], k) => (
          <g key={k} transform={`translate(${layers[i].dx} -7) scale(.33333)`}>
            <Shield x={x} y={y} n={n} kind={kind} />
          </g>
        ))}
        <g transform="translate(-15 -7) scale(.33333)">
          <rect x="703" y="256" width="129" height="39" rx="5" fill="#fff" stroke="#2b2b2b" strokeWidth="3.500" />
          <text x="720" y="286" fontFamily="Roboto" fontWeight="700" fontSize="28" textLength="94" lengthAdjust="spacingAndGlyphs" fill="#333">RM 674</text>
        </g>
        <g transform="translate(1545 -7) scale(.33333)">
          <rect x="169" y="312" width="59" height="24" fill="#fff" />
          <text x="176" y="333" fontFamily="Roboto" fontWeight="700" fontSize="23" textLength="46" lengthAdjust="spacingAndGlyphs" fill="#333">ALT.</text>
        </g>
        {labels.map(([i, x, y, w, t, kind]) => (
          <g key={t} transform={`translate(${layers[i].dx} -7) scale(.33333)`}>
            <text
              x={x}
              y={y}
              textLength={w}
              lengthAdjust="spacingAndGlyphs"
              fontFamily="Roboto"
              fontWeight={kind ? 500 : 400}
              fontSize={kind === "metro" ? 49 : kind === "city" ? 43 : t === "Lakehills" || t === "Elmendorf" || t === "Stockdale" || t === "Hallettsville" || t === "Leakey" ? 36 : 38}
              fill={kind === "metro" ? "#111" : kind === "city" ? "#222" : "#3d4145"}
              stroke="#f6f2ee"
              strokeWidth="6"
              paintOrder="stroke"
            >
              {t}
            </text>
          </g>
        ))}
        <g transform="translate(805 -7) scale(.33333)">
          <ellipse cx="399" cy="473" rx="22" ry="8" fill="#000" opacity=".12" />
          <path d="M399 476C390 450 359 440 359 407a40 40 0 0 1 80 0C439 440 408 450 399 476z" fill="#3fb1ce" />
          <path d="M399 474C392 450 361 438 361 407a38 38 0 0 1 76 0C437 438 406 450 399 474z" stroke="#2f9cb8" strokeWidth="2.500" />
          <circle cx="399" cy="407" r="16" fill="#fff" />
        </g>
        <g transform="translate(-15 -7) scale(.33333)">
          <circle cx="98" cy="868" r="29" fill="#fff" stroke="#a49f9a" strokeWidth="4" />
          <path d="M84 882q-4-18 6-26 12-8 22 2 8 12-2 20-8 7-26 4z" fill="#a49f9a" />
          <path d="M101 856l3 7 7 3-7 3-3 7-3-7-7-3 7-3z" fill="#fff" />
          <text x="135" y="880" fontFamily="Inter" fontWeight="600" fontSize="46" textLength="182" lengthAdjust="spacingAndGlyphs" fill="#fff" stroke="#a49f9a" strokeWidth="7" paintOrder="stroke">mapbox</text>
        </g>
      </svg>
      <div className="absolute bottom-0 right-0 flex h-5 w-[273px] items-center whitespace-pre bg-white/50 pl-[5px] font-['Liberation_Sans',sans-serif] text-[12px] leading-5 text-[#404040]">
        <span className="tracking-[0.1px]">© Mapbox</span>
        <span className="ml-[3px] tracking-[0.15px]">© OpenStreetMap</span>
        <span className="ml-[5px] font-bold tracking-[0.02px]">Improve this map</span>
      </div>
    </div>
  );
}

/* ---------- Page ---------- */

function SearchForm() {
  return (
    <form className="flex items-center gap-1 text-[16px] text-black">
      <input
        defaultValue="San Antonio"
        className="h-[30px] w-[175px] rounded-[2px] border border-[#767676] bg-white px-[3px] tracking-[-0.33px] outline-none"
      />
      <div className="flex h-[22px] w-12 items-center rounded-[2px] border border-[#767676] pl-1 leading-none">
        <span className="tracking-[-0.6px]">AK</span>
        <svg className="ml-auto mr-[3px]" width="10" height="7" viewBox="0 0 10 7" fill="none" stroke="#000" strokeWidth="2"><path d="M1 1l4 4 4-4" /></svg>
      </div>
      <button type="button" className="h-[30px] w-[79px] border-2 border-b-[#222] border-l-[#767676] border-r-[#222] border-t-[#767676] bg-[#add8e6] leading-none tracking-[-0.5px]">SEARCH</button>
      <button type="button" className="h-[30px] w-[66px] border-2 border-b-[#222] border-l-[#767676] border-r-[#222] border-t-[#767676] bg-[#add8e6] leading-none tracking-[-0.65px]">CLEAR</button>
    </form>
  );
}

function Value({ children }: { children: React.ReactNode }) {
  return <b className="font-bold tracking-[-0.06px]">{children}</b>;
}

function WeatherCard() {
  return (
    <section className="ml-[791px] mt-[19px] h-[480px] w-[263px] rounded border border-[#dfdfdf] tracking-[-0.3px]">
      <div className="h-[49px] border-b border-[#dfdfdf] bg-[#f7f7f7] pl-[35px] pt-3 tracking-[-0.34px]">Today's Date: 2021-04-07</div>
      <div className="whitespace-nowrap pl-5 pt-5">
        <p>Current Temperature: <Value>75 ºF</Value></p>
        <p className="pl-[44px]">(Feels Like: <Value>73 ºF)</Value></p>
        <div className="mb-[25px] ml-[87px] mt-[26px] h-[49px] w-[49px] rounded-full bg-[#48484a]" />
        <div className="flex flex-col gap-4">
          <p>High: <Value>89.42 ºF</Value> / Low: <Value>67.71 ºF</Value></p>
          <p>Description: <Value>clear sky</Value></p>
          <p>Humidity: <Value>25%</Value></p>
          <p>Wind Speed: <Value>5.75 mph</Value></p>
          <p>Wind Direction: <Value>ENE</Value></p>
          <p>Pressure: <b className="tracking-[0.06px]">1011 hPa</b></p>
        </div>
      </div>
    </section>
  );
}

export default function App() {
  return (
    <div className={`${SANS} flex h-[1080px] w-[1920px] flex-col overflow-hidden bg-white text-[16px] leading-6 text-[#212529]`}>
      <BrowserChrome />
      <div className="flex min-h-0 flex-1">
        <main className="w-[1905px] px-[15px] pt-[22px]">
          <nav className="ml-[692px] flex h-10 items-center text-[#007bff]">
            <a className="flex h-10 w-[246px] items-center whitespace-nowrap rounded-[2px] bg-[#add8e6] pl-4 tracking-[-0.33px]">Current Weather (Single City)</a>
            <a className="whitespace-nowrap pl-4 tracking-[-0.34px]">Weekly Forecast (Single City)</a>
          </nav>
          <div className="mt-6 flex h-[30px] items-start justify-between">
            <SearchForm />
            <p className="tracking-[-0.33px]"><b className="tracking-[-0.12px]">Current City:</b> San Antonio</p>
          </div>
          <h3 className="ml-[805px] h-[34px] whitespace-nowrap text-[28px] font-medium leading-[34px] tracking-[-0.93px] underline decoration-2 underline-offset-[3px]">CURRENT WEATHER</h3>
          <WeatherCard />
          <div className="mt-[3px]"><WeatherMap /></div>
        </main>
        <div className="flex w-[15px] flex-col border-l border-[#e8e8e8] bg-[#fafafa] pl-[3px] pt-[173px]">
          <div className="h-[824px] w-2 rounded-full bg-[#c1c1c1]" />
        </div>
      </div>
    </div>
  );
}
